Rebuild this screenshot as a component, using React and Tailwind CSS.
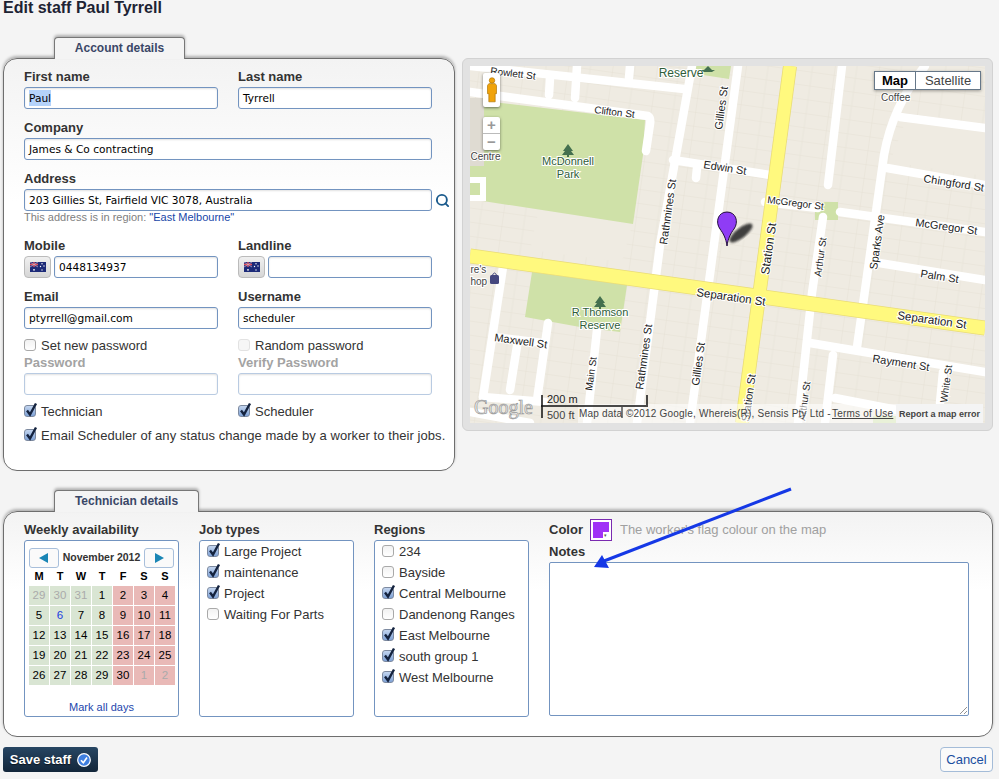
import React from "react";
import { Search } from "lucide-react";

const sans = "font-['Liberation_Sans',Arial,sans-serif]";
const boxFont = "font-['DejaVu_Sans',Verdana,sans-serif]";

function Label({ children, muted }) {
  return (
    <div className={`h-[15px] text-[13px] leading-[15px] font-bold ${muted ? "text-[#a3a3a3]" : "text-[#333]"}`}>
      {children}
    </div>
  );
}

function TextBox({ value, selected, muted, className = "" }) {
  return (
    <div
      className={`h-[22px] rounded-[3px] border bg-white px-[4px] text-[10.6px] leading-[21px] text-black whitespace-nowrap shadow-[inset_0_1px_2px_rgba(0,0,0,0.12)] ${boxFont} ${
        muted ? "border-[#b9cbe2]" : "border-[#7394c0]"
      } ${className}`}
    >
      {selected ? <span className="bg-[#b5d3fb] inline-block h-[16px] leading-[16px]">{value}</span> : value}
    </div>
  );
}

function Check({ checked, disabled }) {
  return (
    <span
      className={`relative inline-block h-[12px] w-[12px] shrink-0 rounded-[3px] border ${
        disabled
          ? "border-[#e2e2e2] bg-[#f6f6f6]"
          : checked
            ? "border-[#7d8aa0] bg-linear-to-b from-[#c3d5ef] to-[#7fa2d6]"
            : "border-[#a9a9a9] bg-linear-to-b from-[#f2f2f2] to-[#fff]"
      }`}
    >
      {checked && (
        <svg viewBox="0 0 14 15" className="absolute -top-[4px] -left-[1px] h-[15px] w-[14px]">
          <path d="M3 8.5 L6 12.5 L12 1.5" fill="none" stroke="#14233f" strokeWidth="2.4" />
        </svg>
      )}
    </span>
  );
}

function CheckRow({ label, checked, disabled, className = "" }) {
  return (
    <div className={`flex h-[14px] items-center gap-[5px] text-[13px] leading-[14px] text-[#333] whitespace-nowrap ${className}`}>
      <Check checked={checked} disabled={disabled} />
      <span className="pt-[1px]">{label}</span>
    </div>
  );
}

function Flag() {
  return (
    <div className="flex h-[22px] w-[27px] items-center justify-center rounded-[4px] border border-[#bbb] bg-linear-to-b from-[#f0f0f0] to-[#d6d6d6]">
      <svg viewBox="0 0 16 10" className="h-[10px] w-[16px]">
        <rect width="16" height="10" fill="#1c2a78" />
        <rect width="8" height="5" fill="#2d2f80" />
        <path d="M0 2.5H8M4 0V5" stroke="#e0525c" strokeWidth="1.3" />
        <path d="M0 0L8 5M8 0L0 5" stroke="#d9c7d6" strokeWidth="0.6" />
        <circle cx="4" cy="7.8" r="0.9" fill="#fff" />
        <circle cx="12" cy="1.8" r="0.7" fill="#fff" />
        <circle cx="14" cy="4" r="0.7" fill="#fff" />
        <circle cx="10.5" cy="4.5" r="0.7" fill="#fff" />
        <circle cx="12" cy="8" r="0.7" fill="#fff" />
      </svg>
    </div>
  );
}

function Panel({ tab, tabWidth, className = "", children }) {
  return (
    <div className={className}>
      <div
        className={`relative z-10 -mb-px ml-[51px] h-[22px] rounded-t-[4px] border border-b-0 border-[#777] bg-[#f4f4f4] pt-[3px] text-center text-[12px] leading-[15px] font-bold text-[#3a4767] shadow-[0_-2px_3px_rgba(0,0,0,0.28)] ${tabWidth}`}
      >
        {tab}
      </div>
      <div className="h-[calc(100%-21px)] rounded-[14px] border border-[#6e6e6e] bg-linear-to-b from-[#f3f3f3] to-white to-[35%] shadow-[0_-2px_3px_rgba(0,0,0,0.28)]">
        {children}
      </div>
    </div>
  );
}

function AccountForm() {
  return (
    <div className="px-[20px] pt-[10px]">
      <div className="grid w-[408px] grid-cols-[194px_194px] gap-x-[20px]">
        <div>
          <Label>First name</Label>
          <TextBox className="mt-[3px]" value="Paul" selected />
        </div>
        <div>
          <Label>Last name</Label>
          <TextBox className="mt-[3px]" value="Tyrrell" />
        </div>
      </div>
      <div className="mt-[11px] w-[408px]">
        <Label>Company</Label>
        <TextBox className="mt-[3px]" value="James & Co contracting" />
      </div>
      <div className="mt-[11px]">
        <Label>Address</Label>
        <div className="mt-[3px] flex items-center gap-[3px]">
          <TextBox className="w-[408px] shrink-0" value="203 Gillies St, Fairfield VIC 3078, Australia" />
          <Search size={15} strokeWidth={3} className="shrink-0 text-[#1a5a8c]" />
        </div>
        <div className="mt-[1px] h-[11px] text-[11px] leading-[11px] text-[#808080]">
          This address is in region: <span className="text-[#1746a8]">"East Melbourne"</span>
        </div>
      </div>
      <div className="mt-[15px] grid w-[408px] grid-cols-[194px_194px] gap-x-[20px]">
        <div>
          <Label>Mobile</Label>
          <div className="mt-[3px] flex gap-[3px]">
            <Flag />
            <TextBox className="flex-1" value="0448134937" />
          </div>
        </div>
        <div>
          <Label>Landline</Label>
          <div className="mt-[3px] flex gap-[3px]">
            <Flag />
            <TextBox className="flex-1" value="" />
          </div>
        </div>
      </div>
      <div className="mt-[11px] grid w-[408px] grid-cols-[194px_194px] gap-x-[20px]">
        <div>
          <Label>Email</Label>
          <TextBox className="mt-[3px]" value="ptyrrell@gmail.com" />
        </div>
        <div>
          <Label>Username</Label>
          <TextBox className="mt-[3px]" value="scheduler" />
        </div>
      </div>
      <div className="mt-[9px] grid w-[408px] grid-cols-[194px_194px] gap-x-[20px]">
        <div>
          <CheckRow label="Set new password" />
          <div className="mt-[3px]">
            <Label muted>Password</Label>
          </div>
          <TextBox className="mt-[3px]" value="" muted />
          <CheckRow className="mt-[9px]" label="Technician" checked />
        </div>
        <div>
          <CheckRow label="Random password" disabled />
          <div className="mt-[3px]">
            <Label muted>Verify Password</Label>
          </div>
          <TextBox className="mt-[3px]" value="" muted />
          <CheckRow className="mt-[9px]" label="Scheduler" checked />
        </div>
      </div>
      <CheckRow className="mt-[10px] tracking-[0.07px]" label="Email Scheduler of any status change made by a worker to their jobs." checked />
    </div>
  );
}

const roads = [
  "M470 66 L684 89",
  "M470 92 L648 116 Q651 118 650 124 L646 151",
  "M692 66 L660 245 L637 423",
  "M738 66 L690 423",
  "M842 66 L828 185",
  "M823 217 L812 293 L798 423",
  "M925 66 Q893 105 884 155 L857 347",
  "M887 168 L985 185",
  "M900 117 L985 128",
  "M840 212 L985 232",
  "M765 202 L818 208",
  "M673 160 L770 175",
  "M697 168 L696 178",
  "M873 262 L985 280",
  "M810 343 L985 372",
  "M833 355 L825 423",
  "M943 372 L940 403",
  "M835 398 L897 410",
  "M493 337 L543 343",
  "M503 267 L483 397",
  "M518 340 L510 390",
  "M548 323 L537 400",
  "M597 330 L587 423",
  "M550 78 L549 95",
  "M577 66 L575 98",
  "M630 66 L629 78",
  "M470 412 L530 423",
  "M483 397 L545 402",
];

const labels = [
  ["Rowlett St", 490, 74, 7, 10],
  ["Clifton St", 594, 113, 7, 10],
  ["Edwin St", 703, 168, 9, 11],
  ["Chingford St", 923, 182, 9, 11],
  ["McGregor St", 767, 203, 7, 10],
  ["McGregor St", 915, 226, 8, 11],
  ["Palm St", 920, 277, 9, 11],
  ["Rayment St", 872, 362, 9, 11],
  ["Maxwell St", 494, 341, 8, 11],
  ["Separation St", 696, 296, 8, 11.5],
  ["Separation St", 897, 319, 8, 11.5],
  ["Gillies St", 722, 130, -82, 11],
  ["Rathmines St", 667, 245, -82, 11],
  ["Rathmines St", 643, 390, -82, 11],
  ["Gillies St", 699, 386, -82, 11],
  ["Main St", 592, 391, -82, 10],
  ["Station St", 769, 275, -82, 12],
  ["Station St", 749, 422, -82, 11],
  ["Arthur St", 821, 277, -82, 10],
  ["Arthur St", 805, 421, -82, 10],
  ["Sparks Ave", 877, 270, -82, 11],
  ["White St", 947, 403, -82, 10],
];

function MapArt() {
  return (
    <svg viewBox="470 66 515 357" className="block h-[357px] w-[515px]">
      <defs>
        <pattern id="lots" width="44" height="14" patternUnits="userSpaceOnUse" patternTransform="rotate(8)">
          <path d="M0 0H44M0 0V14" fill="none" stroke="#e4dfd2" strokeWidth="0.8" />
          <path d="M22 0V14" fill="none" stroke="#e9e4d9" strokeWidth="0.8" />
        </pattern>
        <filter id="soft">
          <feGaussianBlur stdDeviation="1.3" />
        </filter>
      </defs>
      <rect x="470" y="66" width="515" height="357" fill="#efebe2" />
      <rect x="470" y="66" width="515" height="357" fill="url(#lots)" />
      <polygon points="540,205 632,225 622,262 530,250" fill="#efebe2" />
      <polygon points="905,122 985,132 985,176 890,162" fill="#efebe2" />
      <rect x="470" y="98" width="14" height="68" fill="#dfdbd2" />
      <polygon points="484,101 645,120 643,155 633,224 470,199 470,166 484,166" fill="#cfe1a8" />
      <polygon points="532,272 627,285 620,332 580,327 525,317" fill="#cfe1a8" />
      <polygon points="690,66 731,66 729,79 690,73" fill="#cfe1a8" />
      <rect x="815" y="202" width="23" height="18" fill="#cfe1a8" />
      <rect x="873" y="416" width="23" height="7" fill="#cfe1a8" />
      <path d="M470 180 H483 V198 H470" fill="none" stroke="#fff" strokeWidth="6" />
      {roads.map((d) => (
        <path key={d} d={d} fill="none" stroke="#fff" strokeWidth="8.5" strokeLinecap="round" strokeLinejoin="round" />
      ))}
      <path d="M790 66 L742 423" stroke="#e9dc78" strokeWidth="14" />
      <path d="M470 256 L985 328" stroke="#e9dc78" strokeWidth="15" />
      <path d="M790 66 L742 423" stroke="#fff97e" strokeWidth="12.5" />
      <path d="M470 256 L985 328" stroke="#fff97e" strokeWidth="13.5" />
      <g className={sans} fill="#222" stroke="#fff" strokeWidth="2" paintOrder="stroke">
        {labels.map(([text, x, y, angle, size]) => (
          <text key={text + x} x={x} y={y} fontSize={size} transform={`rotate(${angle} ${x} ${y})`}>
            {text}
          </text>
        ))}
      </g>
      <g className={sans} fill="#2f5d38" stroke="#fff" strokeWidth="2" paintOrder="stroke" fontSize="11" textAnchor="middle">
        <text x="568" y="165">McDonnell</text>
        <text x="568" y="178">Park</text>
        <text x="600" y="316">R Thomson</text>
        <text x="600" y="329">Reserve</text>
        <text x="681" y="77" fontSize="12">Reserve</text>
      </g>
      <g fill="#44704f">
        <path d="M568 144 L573 151 L571 151 L574 155 L569 155 V157 H567 V155 L562 155 L565 151 L563 151 Z" />
        <path d="M600 296 L605 303 L603 303 L606 307 L601 307 V309 H599 V307 L594 307 L597 303 L595 303 Z" />
        <path d="M708 66 L712 70 L715 70 L712 72 H704 L701 70 L704 70 Z" />
      </g>
      <g className={sans} fill="#444" stroke="#fff" strokeWidth="2" paintOrder="stroke" fontSize="10">
        <text x="470.500" y="160">Centre</text>
        <text x="470.500" y="273">re's</text>
        <text x="470.500" y="285">hop</text>
        <text x="881" y="101">Coffee</text>
      </g>
      <rect x="490" y="275" width="9" height="9" rx="1.5" fill="#45477e" />
      <path d="M492 276 Q494.500 270 497 276" fill="none" stroke="#45477e" strokeWidth="1" />
      <rect x="578" y="404" width="405" height="19" fill="#fff" fillOpacity="0.55" />
      <ellipse cx="741" cy="233" rx="14" ry="5" fill="#222" opacity="0.85" transform="rotate(-38 741 233)" filter="url(#soft)" />
      <path
        d="M727 246 C726 238 723 233 720 229 C715 222 718 212 727 212 C736 212 739 222 734 229 C731 233 728 238 727 246 Z"
        fill="#8f3cf5"
        stroke="#24103c"
        strokeWidth="1"
      />
      <text x="474" y="414" fontSize="20" fill="#eee" stroke="#999" strokeWidth="0.7" className="font-['Liberation_Serif',serif]">
        Google
      </text>
      <path d="M542 395 V418 M541 406 H648 M647 395 V405" fill="none" stroke="#111" strokeWidth="1.500" />
      <path d="M622 407 V418" fill="none" stroke="#555" strokeWidth="1.500" />
      <g className={sans} fill="#222" fontSize="11">
        <text x="547" y="403">200 m</text>
        <text x="547" y="419" fill="#444">500 ft</text>
      </g>
      <g className={sans} fill="#444" fontSize="10" letterSpacing="0.2">
        <text x="579" y="417">Map data</text>
        <text x="626" y="417">©2012 Google, Whereis(R), Sensis Pty Ltd -</text>
        <text x="832" y="417" textDecoration="underline">Terms of Use</text>
      </g>
      <rect x="896" y="404" width="87" height="19" fill="#f4f4f4" />
      <text x="899" y="417" fontSize="9" fontWeight="bold" fill="#444" className={sans}>
        Report a map error
      </text>
    </svg>
  );
}

function MapPanel() {
  return (
    <div className="relative ml-[7px] mt-[21px] h-[373px] w-[531px] rounded-[6px] border border-[#d2d2d2] bg-[#e2e2e2] p-[7px]">
      <MapArt />
      <div className="absolute top-[14px] left-[20px] flex h-[34px] w-[17px] items-center justify-center rounded-[2px] bg-white shadow-[0_1px_3px_rgba(0,0,0,0.5)]">
        <svg viewBox="0 0 11 28" className="h-[26px] w-[10px]">
          <circle cx="5.500" cy="3.500" r="3" fill="#f0a30a" stroke="#a86f00" strokeWidth="0.7" />
          <path d="M2 7 H9 L10.500 9 V18 H9 V27 H2 V18 H0.500 V9 Z" fill="#f0a30a" stroke="#a86f00" strokeWidth="0.7" />
        </svg>
      </div>
      <div className="absolute top-[58px] left-[20px] flex w-[17px] flex-col rounded-[2px] bg-white text-[#999] shadow-[0_1px_3px_rgba(0,0,0,0.5)]">
        <div className={`h-[17px] border-b border-[#bbb] text-center text-[15px] leading-[16px] font-bold ${sans}`}>+</div>
        <div className={`h-[16px] text-center text-[15px] leading-[15px] font-bold ${sans}`}>−</div>
      </div>
      <div className="absolute top-[12px] left-[411px] flex h-[19px] w-[107px] border border-[#667788] bg-white text-[13px] leading-[17px] shadow-[0_1px_3px_rgba(0,0,0,0.35)]">
        <div className="w-[41px] border-r border-[#667788] text-center font-bold text-black">Map</div>
        <div className="flex-1 text-center text-[#444]">Satellite</div>
      </div>
    </div>
  );
}

const calendar = [
  [29, 30, 31, 1, 2, 3, 4],
  [5, 6, 7, 8, 9, 10, 11],
  [12, 13, 14, 15, 16, 17, 18],
  [19, 20, 21, 22, 23, 24, 25],
  [26, 27, 28, 29, 30, 1, 2],
];

function dayClass(row, col, day) {
  const outside = (row === 0 && day > 20) || (row === 4 && day < 10);
  if (outside) return "text-[#aaa]";
  if (day === 6) return "text-[#1a3ee0]";
  return "text-black";
}

function Calendar() {
  return (
    <div className="mt-[3px] h-[177px] w-[155px] rounded-[3px] border border-[#7394c0] bg-white px-[4px] pt-[7px]">
      <div className="flex h-[20px] items-center justify-between">
        <button className="flex h-[20px] w-[30px] items-center justify-center rounded-[3px] border border-[#a8bfdb] bg-[#fafafa]">
          <svg viewBox="0 0 10 10" className="h-[10px] w-[10px]"><path d="M9 0V10L0 5Z" fill="#1a86b5" /></svg>
        </button>
        <span className="text-[10.5px] font-bold text-[#333]">November 2012</span>
        <button className="flex h-[20px] w-[30px] items-center justify-center rounded-[3px] border border-[#a8bfdb] bg-[#fafafa]">
          <svg viewBox="0 0 10 10" className="h-[10px] w-[10px]"><path d="M1 0V10L10 5Z" fill="#1a86b5" /></svg>
        </button>
      </div>
      <div className="grid h-[18px] grid-cols-[repeat(7,20px)] gap-x-px text-center text-[11px] leading-[16px] font-bold text-black">
        {["M", "T", "W", "T", "F", "S", "S"].map((d, i) => (
          <div key={i}>{d}</div>
        ))}
      </div>
      <div className="grid grid-cols-[repeat(7,20px)] grid-rows-[repeat(5,19px)] gap-px text-center text-[11.500px] leading-[19px]">
        {calendar.map((week, r) =>
          week.map((day, c) => (
            <div key={`${r}-${c}`} className={`${c > 3 ? "bg-[#e9b9b7]" : "bg-[#d9e5d3]"} ${dayClass(r, c, day)}`}>
              {day}
            </div>
          ))
        )}
      </div>
      <div className="mt-[16px] text-center text-[11px] leading-[13px] text-[#2346ad]">Mark all days</div>
    </div>
  );
}

function ListBox({ items }) {
  return (
    <div className="mt-[3px] flex h-[177px] w-[155px] flex-col gap-[7px] rounded-[3px] border border-[#7394c0] bg-white pl-[7px] pt-[3px]">
      {items.map(([label, checked]) => (
        <CheckRow key={label} label={label} checked={checked} />
      ))}
    </div>
  );
}

function TechnicianForm() {
  return (
    <div className="flex gap-[20px] px-[20px] pt-[10px]">
      <div>
        <Label>Weekly availability</Label>
        <Calendar />
      </div>
      <div>
        <Label>Job types</Label>
        <ListBox
          items={[
            ["Large Project", true],
            ["maintenance", true],
            ["Project", true],
            ["Waiting For Parts", false],
          ]}
        />
      </div>
      <div>
        <Label>Regions</Label>
        <ListBox
          items={[
            ["234", false],
            ["Bayside", false],
            ["Central Melbourne", true],
            ["Dandenong Ranges", false],
            ["East Melbourne", true],
            ["south group 1", true],
            ["West Melbourne", true],
          ]}
        />
      </div>
      <div className="flex-1">
        <div className="flex h-[15px] items-center">
          <Label>Color</Label>
          <div className="relative ml-[7px] h-[22px] w-[22px] shrink-0 border border-[#7a2ab0] bg-white p-[2px]">
            <div className="h-full w-full bg-[#a033f7]" />
            <div className="absolute right-[2px] bottom-[2px] h-[6px] w-[6px] bg-white text-center text-[5px] leading-[6px] text-[#555]">▾</div>
          </div>
          <span className="ml-[8px] text-[13px] text-[#a0a0a0] whitespace-nowrap">The worker's flag colour on the map</span>
        </div>
        <div className="mt-[7px]">
          <Label>Notes</Label>
        </div>
        <div className="relative mt-[3px] h-[154px] w-[420px] rounded-[2px] border border-[#7394c0] bg-white">
          <svg viewBox="0 0 8 8" className="absolute right-[1px] bottom-[1px] h-[8px] w-[8px]">
            <path d="M1 8L8 1M5 8L8 5" stroke="#777" strokeWidth="0.8" />
          </svg>
        </div>
      </div>
    </div>
  );
}

export default function App() {
  return (
    <div className={`relative h-[779px] w-[999px] overflow-hidden bg-[#f4f4f4] px-[3px] ${sans}`}>
      <h1 className="h-[16px] text-[16px] leading-[16px] font-bold text-[#1d2333]">Edit staff Paul Tyrrell</h1>
      <div className="mt-[21px] flex items-start">
        <Panel tab="Account details" tabWidth="w-[131px]" className="h-[434px] w-[452px]">
          <AccountForm />
        </Panel>
        <MapPanel />
      </div>
      <Panel tab="Technician details" tabWidth="w-[145px]" className="mt-[19px] h-[247px] w-[990px]">
        <TechnicianForm />
      </Panel>
      <div className="mt-[10px] flex w-[990px] items-start justify-between">
        <button className="flex h-[25px] w-[95px] items-center justify-center gap-[6px] rounded-[3px] bg-linear-to-b from-[#274663] to-[#13263a] text-[13px] font-bold text-white [text-shadow:0_1px_1px_rgba(0,0,0,0.6)]">
          Save staff
          <svg viewBox="0 0 14 14" className="h-[14px] w-[14px]">
            <circle cx="7" cy="7" r="6.300" fill="#3f7fe0" stroke="#fff" strokeWidth="1.200" />
            <path d="M4 7.200L6.300 9.800L10 4.500" fill="none" stroke="#fff" strokeWidth="1.600" />
          </svg>
        </button>
        <button className="h-[25px] w-[53px] rounded-[4px] border border-[#a4bcd8] bg-[#fafafa] text-[13px] text-[#1a4fa0]">Cancel</button>
      </div>
      <svg viewBox="0 0 999 779" className="pointer-events-none absolute top-0 left-0 h-[779px] w-[999px]">
        <path d="M791 489 L604 561" stroke="#1538e6" strokeWidth="3" />
        <polygon points="594,567 602,555 609,568" fill="#1538e6" />
      </svg>
    </div>
  );
}
